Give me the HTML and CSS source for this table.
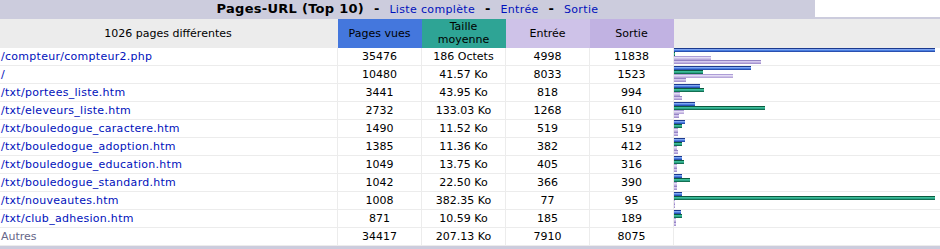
FILE: index.html
```html
<!DOCTYPE html>
<html lang="fr">
<head>
<meta charset="utf-8">
<title>Pages-URL (Top 10)</title>
<link rel="stylesheet" href="styles.css">
</head>
<body>
<div class="aws-border">
  <div class="title-row">
    <div class="aws-title">Pages-URL (Top 10) <span class="sep">-</span> <a href="#">Liste complète</a> <span class="sep">-</span> <a href="#">Entrée</a> <span class="sep">-</span> <a href="#">Sortie</a></div>
    <div class="aws-blank"></div>
  </div>
  <table class="aws-data">
    <colgroup>
      <col class="c-url"><col class="c-num"><col class="c-num"><col class="c-num"><col class="c-num"><col>
    </colgroup>
    <thead>
      <tr>
        <th>1026 pages différentes</th>
        <th class="h-p">Pages vues</th>
        <th class="h-k">Taille<br>moyenne</th>
        <th class="h-e">Entrée</th>
        <th class="h-x">Sortie</th>
        <th class="h-g">&nbsp;</th>
      </tr>
    </thead>
    <tbody>
      <tr><td class="url"><a href="#">/compteur/compteur2.php</a></td><td>35476</td><td>186 Octets</td><td>4998</td><td>11838</td>
        <td class="graph"><div class="bar bp" style="width:261px"></div><div class="bar bk" style="width:1px"></div><div class="bar be" style="width:37px"></div><div class="bar bx" style="width:87px"></div></td></tr>
      <tr><td class="url"><a href="#">/</a></td><td>10480</td><td>41.57 Ko</td><td>8033</td><td>1523</td>
        <td class="graph"><div class="bar bp" style="width:77px"></div><div class="bar bk" style="width:29px"></div><div class="bar be" style="width:59px"></div><div class="bar bx" style="width:12px"></div></td></tr>
      <tr><td class="url"><a href="#">/txt/portees_liste.htm</a></td><td>3441</td><td>43.95 Ko</td><td>818</td><td>994</td>
        <td class="graph"><div class="bar bp" style="width:26px"></div><div class="bar bk" style="width:30px"></div><div class="bar be" style="width:6px"></div><div class="bar bx" style="width:8px"></div></td></tr>
      <tr><td class="url"><a href="#">/txt/eleveurs_liste.htm</a></td><td>2732</td><td>133.03 Ko</td><td>1268</td><td>610</td>
        <td class="graph"><div class="bar bp" style="width:21px"></div><div class="bar bk" style="width:91px"></div><div class="bar be" style="width:10px"></div><div class="bar bx" style="width:5px"></div></td></tr>
      <tr><td class="url"><a href="#">/txt/bouledogue_caractere.htm</a></td><td>1490</td><td>11.52 Ko</td><td>519</td><td>519</td>
        <td class="graph"><div class="bar bp" style="width:11px"></div><div class="bar bk" style="width:8px"></div><div class="bar be" style="width:4px"></div><div class="bar bx" style="width:4px"></div></td></tr>
      <tr><td class="url"><a href="#">/txt/bouledogue_adoption.htm</a></td><td>1385</td><td>11.36 Ko</td><td>382</td><td>412</td>
        <td class="graph"><div class="bar bp" style="width:11px"></div><div class="bar bk" style="width:8px"></div><div class="bar be" style="width:3px"></div><div class="bar bx" style="width:4px"></div></td></tr>
      <tr><td class="url"><a href="#">/txt/bouledogue_education.htm</a></td><td>1049</td><td>13.75 Ko</td><td>405</td><td>316</td>
        <td class="graph"><div class="bar bp" style="width:8px"></div><div class="bar bk" style="width:10px"></div><div class="bar be" style="width:3px"></div><div class="bar bx" style="width:3px"></div></td></tr>
      <tr><td class="url"><a href="#">/txt/bouledogue_standard.htm</a></td><td>1042</td><td>22.50 Ko</td><td>366</td><td>390</td>
        <td class="graph"><div class="bar bp" style="width:8px"></div><div class="bar bk" style="width:16px"></div><div class="bar be" style="width:3px"></div><div class="bar bx" style="width:3px"></div></td></tr>
      <tr><td class="url"><a href="#">/txt/nouveautes.htm</a></td><td>1008</td><td>382.35 Ko</td><td>77</td><td>95</td>
        <td class="graph"><div class="bar bp" style="width:8px"></div><div class="bar bk" style="width:261px"></div><div class="bar be" style="width:1px"></div><div class="bar bx" style="width:1px"></div></td></tr>
      <tr><td class="url"><a href="#">/txt/club_adhesion.htm</a></td><td>871</td><td>10.59 Ko</td><td>185</td><td>189</td>
        <td class="graph"><div class="bar bp" style="width:7px"></div><div class="bar bk" style="width:8px"></div><div class="bar be" style="width:2px"></div><div class="bar bx" style="width:2px"></div></td></tr>
      <tr><td class="url other">Autres</td><td>34417</td><td>207.13 Ko</td><td>7910</td><td>8075</td><td class="graph">&nbsp;</td></tr>
    </tbody>
  </table>
</div>
</body>
</html>
```

FILE: styles.css
```css
html, body {
  margin: 0;
  padding: 0;
  background: #ffffff;
  overflow: hidden;
}
body {
  font: 11px "DejaVu Sans", Verdana, sans-serif;
  color: #000000;
}
a {
  font: 11px "DejaVu Sans", Verdana, sans-serif;
  color: #0011bb;
  text-decoration: none;
  letter-spacing: 0.28px;
}
.aws-border {
  background: #ccccdd;
  padding-bottom: 4px;
}
.title-row {
  display: flex;
  height: 17px;
}
.aws-title {
  width: 815px;
  flex: none;
  background: #ccccdd;
  font: bold 13px "DejaVu Sans", Verdana, sans-serif;
  letter-spacing: 0.28px;
  text-align: center;
  line-height: 17px;
  white-space: pre;
}
.aws-title .sep {
  padding: 0 5px;
}
.aws-title a {
  font-weight: normal;
  letter-spacing: 0.35px;
}
.aws-blank {
  flex: 1;
  background: #ffffff;
}
.aws-data {
  margin-top: 2px;
  width: 100%;
  border-collapse: separate;
  border-spacing: 0;
  table-layout: fixed;
  background: #ffffff;
}
.c-url { width: 338px; }
.c-num { width: 84px; }
.aws-data th,
.aws-data td {
  box-sizing: border-box;
  border: 0;
  border-right: 1px solid #ececec;
  border-bottom: 1px solid #ececec;
  font: 11px "DejaVu Sans", Verdana, sans-serif;
  line-height: 13px;
  text-align: center;
  color: #000000;
  white-space: nowrap;
}
.aws-data th {
  background: #ececec;
  font-weight: normal;
  padding: 1px 2px 1px 1px;
  height: 29px;
}
.aws-data th.h-p,
.aws-data th.h-k,
.aws-data th.h-e,
.aws-data th.h-x {
  border-right: 0;
  border-bottom-color: transparent;
}
.aws-data th.h-p { background: #4477dd; }
.aws-data th.h-k { background: #2ea495; }
.aws-data th.h-e { background: #cec2e8; }
.aws-data th.h-x { background: #c1b2e2; }
.aws-data td {
  padding: 2px;
  height: 18px;
}
.aws-data td.url {
  text-align: left;
  padding: 2px 0 2px 1px;
}
.aws-data td.other {
  color: #666688;
}
.aws-data td.graph {
  text-align: left;
  padding: 0 0 0 0;
  vertical-align: top;
  border-right: 0;
}
.bar {
  height: 4px;
}
.bp { background: linear-gradient(#1c3a8e 0 1px, #80a6f2 1px 2px, #4a7ee0 2px 3px, #2a50b0 3px 4px); }
.bk { background: linear-gradient(#0b5a40 0 1px, #3cbf98 1px 2px, #2ea48a 2px 3px, #137052 3px 4px); }
.be { background: linear-gradient(#ad9dd6 0 1px, #e4ddf5 1px 2px, #cec2e8 2px 3px, #b8a8da 3px 4px); }
.bx { background: linear-gradient(#9484c4 0 1px, #d6cbef 1px 2px, #c1b2e2 2px 3px, #a594cf 3px 4px); }
```
